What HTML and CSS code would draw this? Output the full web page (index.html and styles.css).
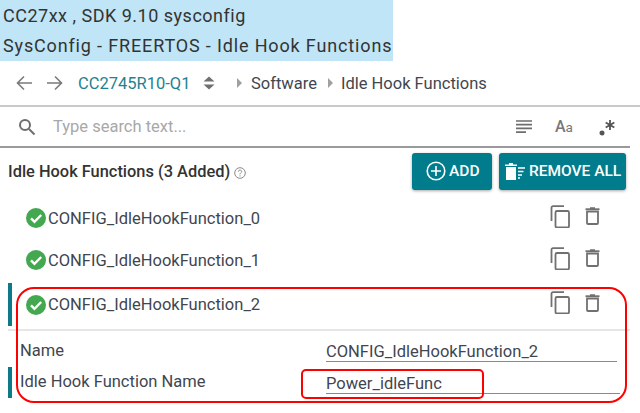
FILE: index.html
```html
<!DOCTYPE html>
<html lang="en">
<head>
<meta charset="utf-8">
<title>SysConfig</title>
<link rel="stylesheet" href="styles.css">
</head>
<body>
<div class="page">
  <header class="title">
    <div class="title-line title-a">CC27xx , SDK 9.10 sysconfig</div>
    <div class="title-line title-b">SysConfig - FREERTOS - Idle Hook Functions</div>
  </header>
  <nav class="nav">
    <svg class="nav-arrow" viewBox="0 0 16 16"><path d="M16 8H1.500M8 1.500 1.500 8 8 14.500"/></svg>
    <svg class="nav-arrow" viewBox="0 0 16 16"><path d="M0 8h14.500M8 1.500 14.500 8 8 14.500"/></svg>
    <span class="device">CC2745R10-Q1</span>
    <svg class="updown" viewBox="0 0 12 14"><path d="M6 0.5 11.5 5.5H.5zM6 13.5 .5 8.500H11.500z"/></svg>
    <svg class="crumb-caret" viewBox="0 0 5 10"><path d="M0 0 5 5 0 10z"/></svg>
    <span class="crumb">Software</span>
    <svg class="crumb-caret" viewBox="0 0 5 10"><path d="M0 0 5 5 0 10z"/></svg>
    <span class="crumb">Idle Hook Functions</span>
  </nav>
  <div class="search">
    <svg class="search-icon" viewBox="0 0 18 18"><circle cx="7" cy="7" r="5"/><path d="M11 11l5.500 5.500"/></svg>
    <span class="placeholder">Type search text...</span>
    <svg class="lines-icon" viewBox="0 0 17 14"><path d="M0 1h16M0 4.700h16M0 8.400h16M0 12.100h10"/></svg>
    <span class="aa">A<small>a</small></span>
    <svg class="regex-icon" viewBox="0 0 18 18"><circle cx="3" cy="15" r="1.600"/><path d="M11 2v10M6.700 4.500l8.600 5M15.300 4.500l-8.600 5"/></svg>
  </div>
  <section class="head">
    <h1 class="head-title">Idle Hook Functions (3 Added)</h1>
    <svg class="help" viewBox="0 0 12 12"><circle cx="6" cy="6" r="5.300"/><path d="M4.300 4.700C4.300 2.600 7.700 2.600 7.700 4.600 7.700 5.800 6 5.800 6 7.300M6 8.300v1.100"/></svg>
    <button class="btn btn-add">
      <svg class="btn-plus" viewBox="0 0 20 20"><circle cx="10" cy="10" r="8.800"/><path d="M10 5v10M5 10h10"/></svg>ADD
    </button>
    <button class="btn btn-remove">
      <svg class="btn-trash" viewBox="0 0 21 17"><path class="fill" d="M1 4h10v13H1zM0 1.500h12v1.500H0zM4 0h4v1.500H4z"/><path class="dash" d="M13 5h7M13 8.500h5.500M13 12h4M13 15h2"/></svg>REMOVE ALL
    </button>
  </section>
  <div class="row row-first">
    <svg class="ok" viewBox="0 0 20 20"><circle cx="10" cy="10" r="10"/><path d="M5 10.300l3.500 3.500 6.700-6.800"/></svg>
    <span class="row-name">CONFIG_IdleHookFunction_0</span>
    <svg class="copy" viewBox="0 0 20 23"><path d="M14 1.200H3A1.500 1.500 0 0 0 1.500 2.700V16M7 6H17.500A1.500 1.500 0 0 1 19 7.500v13.500A1.500 1.500 0 0 1 17.500 22.500H7A1.500 1.500 0 0 1 5.500 21V7.500A1.500 1.500 0 0 1 7 6z"/></svg>
    <svg class="trash" viewBox="0 0 15 18"><path class="trash-lid" d="M.5 2.200h14"/><path d="M5 1.200h5M2 4.500h11v11.500a1 1 0 0 1-1 1H3a1 1 0 0 1-1-1z"/></svg>
  </div>
  <div class="row">
    <svg class="ok" viewBox="0 0 20 20"><circle cx="10" cy="10" r="10"/><path d="M5 10.300l3.500 3.500 6.700-6.800"/></svg>
    <span class="row-name">CONFIG_IdleHookFunction_1</span>
    <svg class="copy" viewBox="0 0 20 23"><path d="M14 1.200H3A1.500 1.500 0 0 0 1.500 2.700V16M7 6H17.500A1.500 1.500 0 0 1 19 7.500v13.500A1.500 1.500 0 0 1 17.500 22.500H7A1.500 1.500 0 0 1 5.500 21V7.500A1.500 1.500 0 0 1 7 6z"/></svg>
    <svg class="trash" viewBox="0 0 15 18"><path class="trash-lid" d="M.5 2.200h14"/><path d="M5 1.200h5M2 4.500h11v11.500a1 1 0 0 1-1 1H3a1 1 0 0 1-1-1z"/></svg>
  </div>
  <div class="row row-open">
    <svg class="ok" viewBox="0 0 20 20"><circle cx="10" cy="10" r="10"/><path d="M5 10.300l3.500 3.500 6.700-6.800"/></svg>
    <span class="row-name">CONFIG_IdleHookFunction_2</span>
    <svg class="copy" viewBox="0 0 20 23"><path d="M14 1.200H3A1.500 1.500 0 0 0 1.500 2.700V16M7 6H17.500A1.500 1.500 0 0 1 19 7.500v13.500A1.500 1.500 0 0 1 17.500 22.500H7A1.500 1.500 0 0 1 5.500 21V7.500A1.500 1.500 0 0 1 7 6z"/></svg>
    <svg class="trash" viewBox="0 0 15 18"><path class="trash-lid" d="M.5 2.200h14"/><path d="M5 1.200h5M2 4.500h11v11.500a1 1 0 0 1-1 1H3a1 1 0 0 1-1-1z"/></svg>
  </div>
  <div class="field field-name">
    <span class="field-label">Name</span>
    <span class="field-value">CONFIG_IdleHookFunction_2</span>
  </div>
  <div class="field field-hook">
    <span class="field-label">Idle Hook Function Name</span>
    <span class="field-value">Power_idleFunc</span>
  </div>
  <div class="mark mark-outer"></div>
  <div class="mark mark-inner"></div>
</div>
</body>
</html>
```
FILE: styles.css
```css
* { box-sizing: border-box; }
html, body { margin: 0; padding: 0; background: #fff; }
.page {
  position: relative;
  width: 640px;
  height: 413px;
  overflow: hidden;
  font-family: Roboto, "Liberation Sans", sans-serif;
  font-size: 16.5px;
  color: #3f4650;
}
.title {
  width: 393px;
  height: 61px;
  background: #bfe5f6;
  padding: 1px 0 0 3px;
  color: #333;
}
.title-line { font-size: 18px; line-height: 30px; white-space: nowrap; }
.title-a { letter-spacing: .5px; }
.title-b { letter-spacing: .85px; }
.nav {
  height: 46px;
  display: flex;
  align-items: center;
  border-bottom: 2px solid #c9c9c9;
  padding: 0 0 0 16px;
}
.nav-arrow { width: 16px; height: 16px; fill: none; stroke: #7a7a7a; stroke-width: 1.600; margin-right: 15px; }
.device { color: #1f8290; width: 113px; white-space: nowrap; }
.updown { width: 12px; height: 14px; fill: #707070; margin: 0 0 0 12px; }
.crumb-caret { width: 5px; height: 10px; fill: #a0a0a0; margin: 0 9px 0 22px; }
.crumb + .crumb-caret { margin: 0 8px 0 11px; }
.crumb { white-space: nowrap; }
.search {
  height: 41px;
  width: 630px;
  display: flex;
  align-items: center;
  border-bottom: 2px solid #9a9a9a;
  padding-left: 18px;
}
.search-icon { width: 18px; height: 18px; fill: none; stroke: #6e6e6e; stroke-width: 2; }
.placeholder { margin-left: 17px; color: #a8a8a8; flex: 1; }
.lines-icon { width: 17px; height: 14px; fill: none; stroke: #6e6e6e; stroke-width: 1.700; margin-right: 22px; }
.aa { font-size: 16px; color: #777; width: 22px; font-weight: 500; }
.aa small { font-size: 13.500px; font-weight: 400; }
.regex-icon { width: 18px; height: 18px; margin: 0 13px 0 22px; fill: #555; stroke: #555; stroke-width: 1.800; }
.head {
  display: flex;
  align-items: center;
  height: 42px;
  padding: 4px 14px 0 8px;
}
.head-title { font-size: 16.400px; font-weight: 500; color: #333; margin: 0; white-space: nowrap; }
.help { width: 12px; height: 12px; margin: 4px 0 0 4px; fill: none; stroke: #8a8a8a; stroke-width: 1; }
.btn {
  height: 37px;
  border: 0;
  border-radius: 3px;
  background: #007c8c;
  color: #fff;
  font: 500 15.500px Roboto, "Liberation Sans", sans-serif;
  display: flex;
  align-items: center;
  padding: 0;
  box-shadow: 0 1px 3px rgba(0,0,0,.35);
}
.btn-add { width: 80px; margin-left: auto; padding-left: 14px; }
.btn-remove { width: 127px; margin-left: 7px; padding-left: 6px; white-space: nowrap; }
.btn-plus { width: 20px; height: 20px; fill: none; stroke: #fff; stroke-width: 1.600; margin-right: 3px; }
.btn-trash { width: 21px; height: 17px; margin-right: 3px; }
.btn-trash .fill { fill: #fff; }
.btn-trash .dash { stroke: #fff; stroke-width: 1.500; fill: none; }
.row {
  display: flex;
  align-items: center;
  height: 42px;
  padding-left: 26px;
}
.row-first { margin-top: 7px; }
.ok { width: 20px; height: 20px; flex: none; }
.ok circle { fill: #43a84f; }
.ok path { fill: none; stroke: #fff; stroke-width: 2.400; }
.row-name { margin-left: 2px; flex: 1; white-space: nowrap; }
.copy { width: 20px; height: 23px; margin-top: -4px; fill: none; stroke: #707070; stroke-width: 1.800; }
.trash { width: 15px; height: 18px; margin: -4px 40px 0 15px; fill: none; stroke: #707070; stroke-width: 1.800; }
.row-open {
  height: 43px;
  margin: 2px 0 0 8px;
  border-left: 4px solid #0e7a88;
  padding-left: 14px;
}
.field {
  display: flex;
  align-items: flex-end;
}
.field-name {
  margin: 3px 10px 0 8px;
  height: 33px;
  border-top: 2px solid #e6e6e6;
  padding-left: 12px;
}
.field-hook {
  margin: 5px 0 0 8px;
  height: 31px;
  border-left: 4px solid #0e7a88;
  padding: 0 0 4px 8px;
}
.field-label { width: 306px; line-height: 18px; padding-bottom: 2px; white-space: nowrap; }
.field-hook .field-label { padding-bottom: 3px; }
.field-value {
  display: block;
  width: 291px;
  line-height: 18px;
  border-bottom: 1px solid #8a8a8a;
  white-space: nowrap;
}
.field-hook .field-value { width: 294px; }
.mark { position: absolute; border: 2px solid #f00; }
.mark-outer { left: 16px; top: 287px; width: 611px; height: 116px; border-radius: 18px; }
.mark-inner { left: 301px; top: 369px; width: 183px; height: 30px; border-radius: 5px; }
```
